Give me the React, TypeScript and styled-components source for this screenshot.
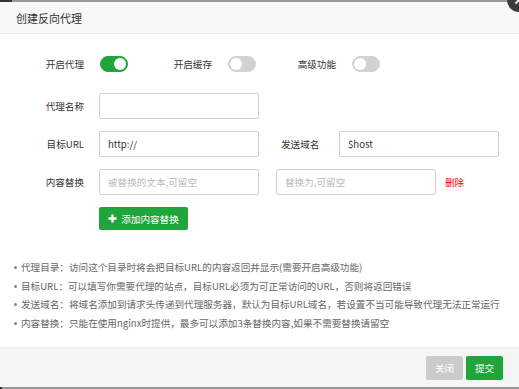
import React, { FC } from "react";
import styled, { createGlobalStyle } from "styled-components";

const GlobalStyle = createGlobalStyle`
  html, body {
    margin: 0;
    padding: 0;
    background: #fff;
  }
  body {
    font-family: "Noto Sans CJK SC", "Noto Sans", sans-serif;
    color: #333;
  }
  * {
    box-sizing: border-box;
  }
`;

const green = "#20a53a";

const Page = styled.div`
  position: relative;
  width: 519px;
  height: 389px;
  overflow: hidden;
  display: flex;
  flex-direction: column;
`;

const EdgeStrip = styled.div<{ $dark: number }>`
  height: 2px;
  flex: none;
  background: linear-gradient(
    to right,
    #333 0,
    #333 ${({ $dark }) => $dark}px,
    #999 ${({ $dark }) => $dark}px
  );
`;

const CloseButton = styled.div`
  position: absolute;
  top: -12px;
  right: -12px;
  width: 24px;
  height: 24px;
  border-radius: 50%;
  background: #3a3a3a;
  display: flex;
  align-items: center;
  justify-content: center;
`;

const Header = styled.div`
  flex: none;
  height: 32px;
  background: #f8f8f8;
  border-bottom: 1px solid #eee;
  display: flex;
  align-items: center;
  padding-left: 16px;
  font-size: 11px;
  color: #333;
`;

const Body = styled.div`
  flex: 1;
  padding-top: 17px;
  display: flex;
  flex-direction: column;
`;

const Row = styled.div<{ $gap?: number }>`
  display: flex;
  align-items: center;
  height: 26px;
  margin-bottom: ${({ $gap = 12 }) => $gap}px;
`;

const Label = styled.span<{ $width?: number; $left?: number }>`
  width: ${({ $width = 70 }) => $width}px;
  margin-left: ${({ $left = 0 }) => $left}px;
  flex: none;
  text-align: right;
  font-size: 9.6px;
  color: #333;
  white-space: nowrap;
`;

const ToggleTrack = styled.span<{ $on: boolean; $left: number }>`
  position: relative;
  flex: none;
  width: 28px;
  height: 16px;
  margin-left: ${({ $left }) => $left}px;
  border-radius: 8px;
  background: ${({ $on }) => ($on ? green : "#d2d2d2")};
  border: 1px solid ${({ $on }) => ($on ? green : "#d2d2d2")};
`;

const ToggleKnob = styled.span<{ $on: boolean }>`
  position: absolute;
  top: 1px;
  left: ${({ $on }) => ($on ? "13px" : "1px")};
  width: 12px;
  height: 12px;
  border-radius: 50%;
  background: #fff;
`;

const Input = styled.input<{ $left: number }>`
  flex: none;
  width: 160px;
  height: 26px;
  margin-left: ${({ $left }) => $left}px;
  padding: 0 8px;
  border: 1px solid #d2d2d2;
  border-radius: 2px;
  font-family: inherit;
  font-size: 9.6px;
  color: #333;
  outline: none;
  &::placeholder {
    color: #bbb;
  }
`;

const DeleteLink = styled.span`
  margin-left: 9px;
  font-size: 9.6px;
  color: #f00;
`;

const AddButton = styled.button`
  margin-left: 99px;
  width: 89px;
  height: 23px;
  border: none;
  border-radius: 2px;
  background: ${green};
  color: #fff;
  font-family: inherit;
  font-size: 9.6px;
  display: flex;
  align-items: center;
  justify-content: center;
  gap: 4px;
  padding: 0;
`;

const Tips = styled.ul`
  margin: 28px 0 0 0;
  padding: 0 0 0 21px;
  list-style: none;
`;

const Tip = styled.li`
  position: relative;
  height: 18.6px;
  line-height: 18.6px;
  font-size: 9.6px;
  color: #666;
  white-space: nowrap;
  &::before {
    content: "";
    position: absolute;
    left: -7px;
    top: 8px;
    width: 3px;
    height: 3px;
    border-radius: 50%;
    background: #888;
  }
`;

const Footer = styled.div`
  flex: none;
  height: 40px;
  background: #f4f5f5;
  border-top: 1px solid #e9e9e9;
  display: flex;
  align-items: center;
  justify-content: flex-end;
  gap: 3px;
  padding-right: 16px;
`;

const FooterButton = styled.button<{ $primary?: boolean }>`
  width: 37px;
  height: 24px;
  border: none;
  border-radius: 2px;
  padding: 0;
  background: ${({ $primary }) => ($primary ? green : "#cbcbcb")};
  color: #fff;
  font-family: inherit;
  font-size: 9.6px;
`;

type ToggleProps = { label: string; on: boolean; labelLeft?: number; labelWidth?: number };

const Toggle: FC<ToggleProps> = ({ label, on, labelLeft = 0, labelWidth = 70 }) => (
  <>
    <Label $left={labelLeft} $width={labelWidth}>
      {label}
    </Label>
    <ToggleTrack $on={on} $left={16}>
      <ToggleKnob $on={on} />
    </ToggleTrack>
  </>
);

const tips = [
  "代理目录：访问这个目录时将会把目标URL的内容返回并显示(需要开启高级功能)",
  "目标URL：可以填写你需要代理的站点，目标URL必须为可正常访问的URL，否则将返回错误",
  "发送域名：将域名添加到请求头传递到代理服务器，默认为目标URL域名，若设置不当可能导致代理无法正常运行",
  "内容替换：只能在使用nginx时提供，最多可以添加3条替换内容,如果不需要替换请留空",
];

const App: FC = () => (
  <>
    <GlobalStyle />
    <Page>
      <EdgeStrip $dark={12} />
      <CloseButton>
        <svg width="10" height="10" viewBox="0 0 10 10">
          <path d="M2 2L8 8M8 2L2 8" stroke="#fff" strokeWidth="1.8" strokeLinecap="round" />
        </svg>
      </CloseButton>
      <Header>创建反向代理</Header>
      <Body>
        <Row $gap={16}>
          <Toggle label="开启代理" on labelLeft={14} />
          <Toggle label="开启缓存" on={false} labelLeft={45} labelWidth={39} />
          <Toggle label="高级功能" on={false} labelLeft={41} labelWidth={39} />
        </Row>
        <Row>
          <Label $left={14}>代理名称</Label>
          <Input $left={15} />
        </Row>
        <Row>
          <Label $left={14}>目标URL</Label>
          <Input $left={15} defaultValue="http://" />
          <Label $left={22} $width={38}>
            发送域名
          </Label>
          <Input $left={20} defaultValue="$host" />
        </Row>
        <Row>
          <Label $left={14}>内容替换</Label>
          <Input $left={15} placeholder="被替换的文本,可留空" />
          <Input $left={17} placeholder="替换为,可留空" />
          <DeleteLink>删除</DeleteLink>
        </Row>
        <AddButton>
          <svg width="9" height="9" viewBox="0 0 9 9">
            <path d="M4.5 0.5V8.5M0.5 4.5H8.5" stroke="#fff" strokeWidth="2.4" />
          </svg>
          添加内容替换
        </AddButton>
        <Tips>
          {tips.map((t) => (
            <Tip key={t}>{t}</Tip>
          ))}
        </Tips>
      </Body>
      <Footer>
        <FooterButton>关闭</FooterButton>
        <FooterButton $primary>提交</FooterButton>
      </Footer>
      <EdgeStrip $dark={2} />
    </Page>
  </>
);

export default App;
